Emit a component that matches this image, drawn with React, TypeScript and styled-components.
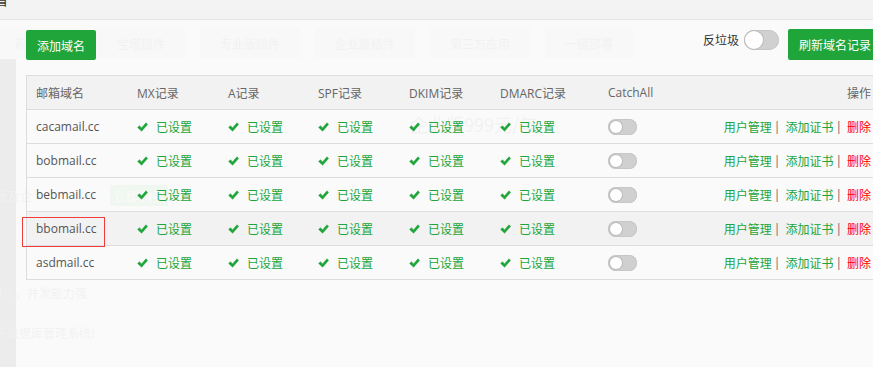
import React from "react";
import styled, { createGlobalStyle } from "styled-components";

const GREEN = "#20a53a";

const Global = createGlobalStyle`
  html, body { margin: 0; padding: 0; background: #fafafa; overflow: hidden; }
  body { font-family: "Open Sans", "Noto Sans CJK SC", sans-serif; }
  * { box-sizing: border-box; }
`;

const Page = styled.div`
  position: relative;
  width: 873px;
  height: 367px;
  overflow: hidden;
  background: #fafafa;
`;

/* ---------- underlying page, seen through the dialog ---------- */
const Backdrop = styled.div`
  height: 100%;
  padding-top: 28px;
  background: linear-gradient(#707070, #707070) 0 59px / 16px 100% no-repeat, #fafafa;
  color: #a2a2a2;
  font-family: "Noto Sans CJK SC", sans-serif;
  font-size: 12px;
  display: flex;
  flex-direction: column;
  align-items: flex-start;
  white-space: nowrap;
`;

const StoreTabs = styled.div`
  display: flex;
  gap: 15px;
  margin-left: -6px;
  height: 30px;
`;

const StoreTab = styled.div`
  padding: 0 20px;
  background: #e4e4e4;
  display: flex;
  align-items: center;
`;

const PriceLine = styled.div`
  margin: 56px 0 0 410px;
  font-size: 18px;
  line-height: 20px;
`;

const BuyRow = styled.div`
  display: flex;
  align-items: center;
  height: 21px;
  margin-top: 51px;
`;

const GhostLead = styled.span`
  margin-left: -16px;
`;

const GhostBuy = styled.span`
  margin-left: 78px;
  height: 21px;
  padding: 0 3px;
  display: flex;
  align-items: center;
  background: rgb(150, 222, 165);
  color: #fff;
  font-size: 13px;
`;

const GhostLine = styled.div<{ $top: number; $left: number }>`
  margin-top: ${(p) => p.$top}px;
  margin-left: ${(p) => p.$left}px;
  line-height: 16px;
`;

/* ---------- dialog ---------- */
const Modal = styled.div`
  position: absolute;
  top: 0;
  left: 0;
  width: 908px;
  height: 100%;
  background: rgba(250, 250, 250, 0.9);
  display: flex;
  flex-direction: column;
`;

const TitleBar = styled.div`
  flex: none;
  height: 20px;
  background: #f3f3f3;
  border-bottom: 1px solid #e5e5e5;
  overflow: hidden;
`;

const Title = styled.div`
  margin: -8px 0 0 -76px;
  font-family: "Noto Sans CJK SC", sans-serif;
  font-size: 14px;
  line-height: 14px;
  color: #333;
  white-space: nowrap;
`;

const Body = styled.div`
  padding: 9px 26px 0;
`;

const Toolbar = styled.div`
  display: flex;
  justify-content: space-between;
  align-items: flex-start;
`;

const Button = styled.button<{ $h: number; $top?: number }>`
  height: ${(p) => p.$h}px;
  margin-top: ${(p) => p.$top ?? 0}px;
  padding: 0 11px;
  border: none;
  border-radius: 2px;
  background: ${GREEN};
  color: #fff;
  font-family: "Noto Sans CJK SC", sans-serif;
  font-size: 12px;
  cursor: pointer;
`;

const RightGroup = styled.div`
  display: flex;
  align-items: flex-start;
`;

const SwitchLabel = styled.span`
  margin: 1px 5px 0 0;
  height: 20px;
  line-height: 20px;
  font-family: "Noto Sans CJK SC", sans-serif;
  font-size: 12px;
  color: #333;
`;

const Track = styled.span<{ $w: number; $h: number; $gap?: number }>`
  display: flex;
  align-items: center;
  width: ${(p) => p.$w}px;
  height: ${(p) => p.$h}px;
  padding: 0 ${(p) => p.$gap ?? 2}px;
  border-radius: ${(p) => p.$h / 2}px;
  background: #d0d0d0;
  box-shadow: inset 0 0 0 1px #c6c6c6;
`;

const Knob = styled.span<{ $d: number }>`
  width: ${(p) => p.$d}px;
  height: ${(p) => p.$d}px;
  border-radius: 50%;
  background: #fff;
  box-shadow: 0 0 0 1px #bcbcbc;
`;

const HeadSwitch = styled.div`
  margin: 1px 9px 0 0;
`;

const Table = styled.div`
  margin-top: 15px;
  border: 1px solid #ddd;
`;

const Row = styled.div<{ $head?: boolean; $hover?: boolean }>`
  display: grid;
  grid-template-columns: 101px 91px 90px 91px 91px 108px 100px 1fr;
  height: 34px;
  border-top: 1px solid #ddd;
  &:first-child {
    height: 33px;
    border-top: none;
  }
  background: ${(p) => (p.$head ? "#f2f2f2" : p.$hover ? "#f2f2f2" : "transparent")};
  color: ${(p) => (p.$head ? "#666" : "#555")};
`;

const Cell = styled.div<{ $end?: boolean }>`
  display: flex;
  align-items: center;
  justify-content: ${(p) => (p.$end ? "flex-end" : "flex-start")};
  padding: 0 ${(p) => (p.$end ? "10px" : "0")} 0 9px;
  font-size: 12px;
  white-space: nowrap;
`;

const Status = styled.span`
  display: flex;
  align-items: center;
  color: ${GREEN};
  svg {
    margin-right: 8px;
  }
`;

const Focused = styled.span`
  position: relative;
  display: inline-block;
  line-height: 16px;
  &::after {
    content: "";
    position: absolute;
    top: -4px;
    bottom: -10px;
    left: -14px;
    right: -9px;
    border: 1px solid #f23c3c;
  }
`;

const Link = styled.a<{ $danger?: boolean }>`
  color: ${(p) => (p.$danger ? "#f00" : GREEN)};
  text-decoration: none;
  cursor: pointer;
`;

const Sep = styled.span`
  margin: 0 5px 0 2px;
  color: #666;
`;

const domains = ["cacamail.cc", "bobmail.cc", "bebmail.cc", "bbomail.cc", "asdmail.cc"];
const heads = ["邮箱域名", "MX记录", "A记录", "SPF记录", "DKIM记录", "DMARC记录", "CatchAll"];

const CheckIcon = () => (
  <svg width="11" height="10" viewBox="0 0 11 10">
    <path
      d="M0.6 5.4 L2.5 3.7 L4.5 5.9 L9 0.8 L10.6 2.4 L4.6 9.2 Z"
      fill={GREEN}
      stroke={GREEN}
      strokeWidth="0.5"
      strokeLinejoin="round"
    />
  </svg>
);

const Ok = () => (
  <Status>
    <CheckIcon />
    已设置
  </Status>
);

export default function App() {
  return (
    <Page>
      <Global />
      <Backdrop>
        <StoreTabs>
          {["系统工具", "宝塔插件", "专业版插件", "企业版插件", "第三方应用", "一键部署"].map((t) => (
            <StoreTab key={t}>{t}</StoreTab>
          ))}
        </StoreTabs>
        <PriceLine>企业版999元/年</PriceLine>
        <BuyRow>
          <GhostLead>业版及企</GhostLead>
          <GhostBuy>立即购买</GhostBuy>
        </BuyRow>
        <GhostLine $top={79} $left={-9}>
          用少，并发能力强
        </GhostLine>
        <GhostLine $top={24} $left={-17}>
          关系数据库管理系统!
        </GhostLine>
      </Backdrop>

      <Modal>
        <TitleBar>
          <Title>邮局域名查看</Title>
        </TitleBar>
        <Body>
          <Toolbar>
            <Button $h={30} $top={1}>
              添加域名
            </Button>
            <RightGroup>
              <SwitchLabel>反垃圾</SwitchLabel>
              <HeadSwitch>
                <Track $w={35} $h={20} $gap={1}>
                  <Knob $d={18} />
                </Track>
              </HeadSwitch>
              <Button $h={31}>刷新域名记录</Button>
            </RightGroup>
          </Toolbar>

          <Table>
            <Row $head>
              {heads.map((h) => (
                <Cell key={h}>{h}</Cell>
              ))}
              <Cell $end>操作</Cell>
            </Row>
            {domains.map((d, i) => (
              <Row key={d} $hover={i === 3}>
                <Cell>{i === 3 ? <Focused>{d}</Focused> : d}</Cell>
                <Cell>
                  <Ok />
                </Cell>
                <Cell>
                  <Ok />
                </Cell>
                <Cell>
                  <Ok />
                </Cell>
                <Cell>
                  <Ok />
                </Cell>
                <Cell>
                  <Ok />
                </Cell>
                <Cell>
                  <Track $w={29} $h={16}>
                    <Knob $d={12} />
                  </Track>
                </Cell>
                <Cell $end>
                  <Link>用户管理</Link>
                  <Sep>|</Sep>
                  <Link>添加证书</Link>
                  <Sep>|</Sep>
                  <Link $danger>删除</Link>
                </Cell>
              </Row>
            ))}
          </Table>
        </Body>
      </Modal>
    </Page>
  );
}
